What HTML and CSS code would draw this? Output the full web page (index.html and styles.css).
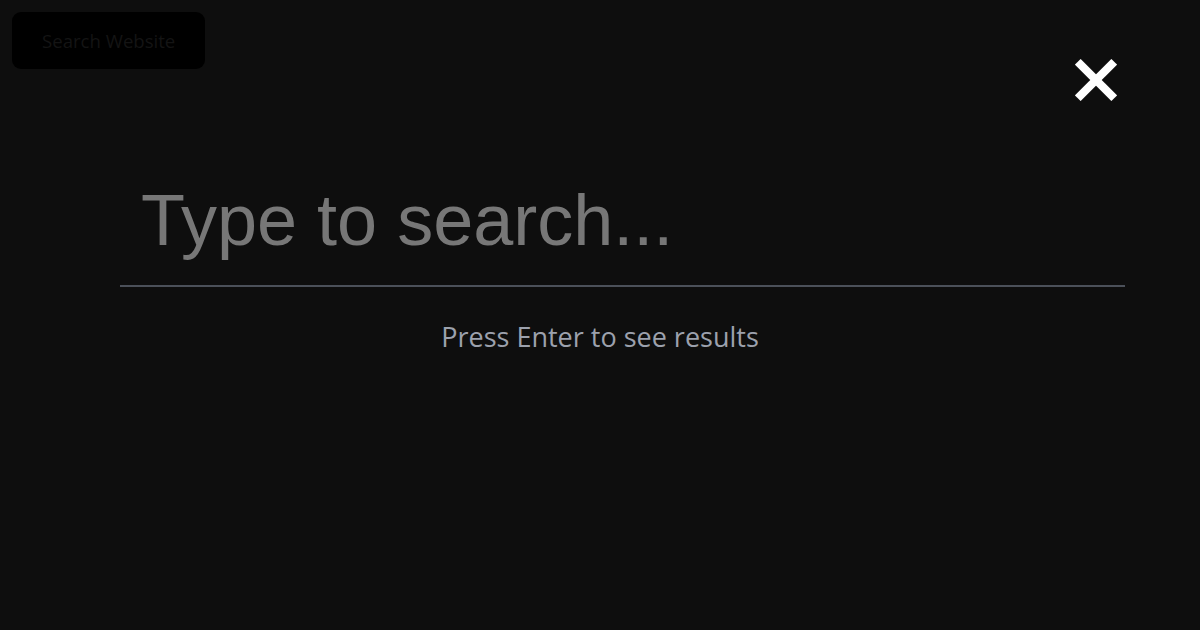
FILE: index.html
```html
<!DOCTYPE html>
<html lang="en">
<head>
<meta charset="utf-8">
<title>Search</title>
<link rel="stylesheet" href="styles.css">
</head>
<body>
<header class="topbar">
  <button class="open-btn" type="button">Search Website</button>
</header>
<main class="search-overlay">
  <button class="close-btn" type="button" aria-label="Close">
    <svg width="42" height="42" viewBox="0 0 42 42">
      <line x1="2.8" y1="2.8" x2="39.2" y2="39.2" stroke="#fff" stroke-width="8"/>
      <line x1="39.2" y1="2.8" x2="2.8" y2="39.2" stroke="#fff" stroke-width="8"/>
    </svg>
  </button>
  <form class="search-form">
    <input class="search-input" type="text" placeholder="Type to search...">
    <p class="hint">Press Enter to see results</p>
  </form>
</main>
</body>
</html>
```
FILE: styles.css
```css
html, body {
  margin: 0;
  padding: 0;
  background: #0e0e0e;
  height: 100%;
}
body {
  font-family: "Open Sans", "Noto Sans", sans-serif;
}
.topbar {
  padding: 12px;
  display: flex;
}
.open-btn {
  background: #000;
  color: #141414;
  border: none;
  border-radius: 9px;
  height: 57px;
  padding: 0 30px;
  font-family: "Open Sans", "Noto Sans", sans-serif;
  font-size: 18.6px;
}
.search-overlay {
  display: block;
}
.close-btn {
  position: absolute;
  left: 1075px;
  top: 59px;
  width: 42px;
  height: 42px;
  padding: 0;
  border: none;
  background: transparent;
  display: block;
}
.close-btn svg {
  display: block;
}
.search-form {
  margin: 80px 0 0;
  display: flex;
  flex-direction: column;
}
.search-input {
  box-sizing: border-box;
  width: 1005px;
  margin-left: 120px;
  background: transparent;
  border: none;
  border-bottom: 2px solid #4b5059;
  outline: none;
  padding: 18px 20px 25px 21px;
  font-family: "Liberation Sans", Arial, sans-serif;
  font-size: 72px;
  line-height: normal;
  color: #777;
  height: 126px;
}
.search-input::placeholder {
  color: #777;
}
.hint {
  margin: 31px 0 0;
  text-align: center;
  color: #9ca1ad;
  font-size: 27px;
}
```
